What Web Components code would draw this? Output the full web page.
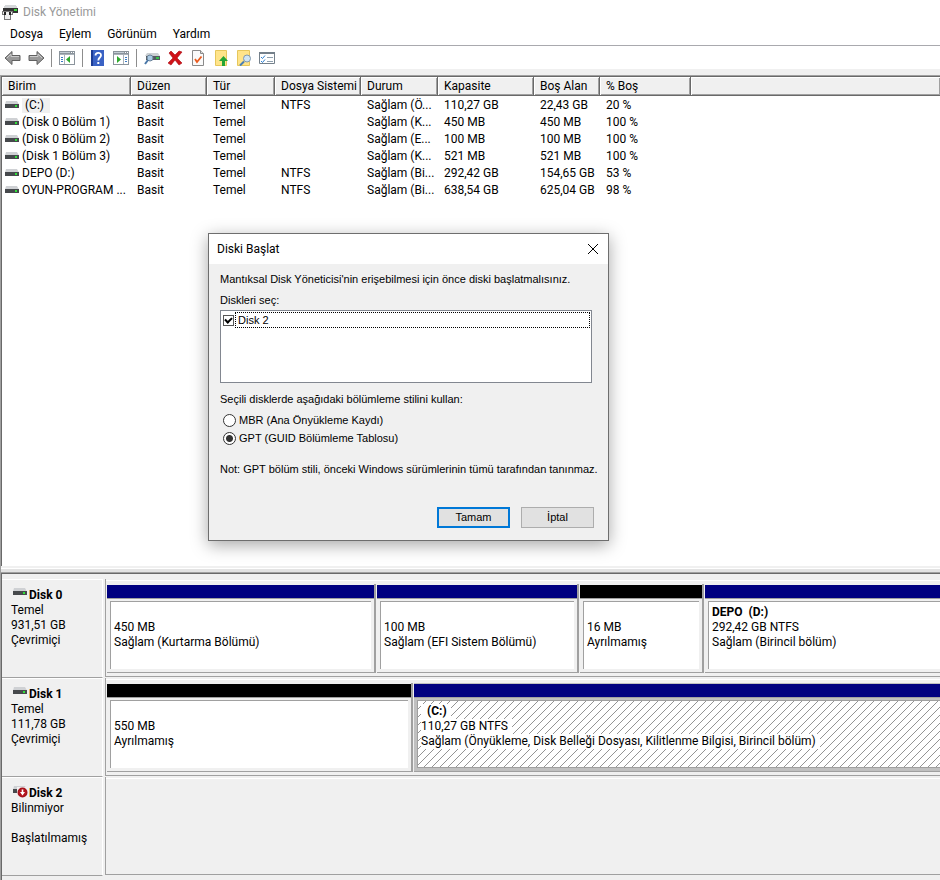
<!DOCTYPE html>
<html lang="tr">
<head>
<meta charset="utf-8">
<title>Disk Yönetimi</title>
<style>
  html, body{
    height: 100%;
    margin: 0;
  }
  body{
    font: 12px/15px Roboto, "Segoe UI", sans-serif;
    color: #000;
    background: #f0f0f0;
    overflow: hidden;
  }
</style>
</head>
<body>

<template id="tpl-window">
<style>
  :host{
    display: flex;
    flex-direction: column;
    height: 100%;
    position: relative;
  }
  main{
    flex: 1;
    min-height: 0;
    display: flex;
    flex-direction: column;
    border-left: 1px solid #a0a0a0;
    border-top: 1px solid #a0a0a0;
  }
  .volumes{
    flex: 0 0 490px;
    background: #fff;
    border-left: 1px solid #696969;
    border-top: 1px solid #696969;
    box-sizing: border-box;
  }
  .splitter{
    height: 7px;
    box-sizing: border-box;
    border-top: 2px solid #f0f0f0;
    border-bottom: 1px solid #a0a0a0;
    background: linear-gradient(#fff 1px, #e3e3e3 1px);
  }
  .disks{
    flex: 1;
    min-height: 0;
    overflow: hidden;
    padding-top: 5px;
    border-left: 1px solid #696969;
    border-top: 1px solid #696969;
  }
</style>
<slot name="bars"></slot>
<main>
  <div class="volumes"><slot name="volumes"></slot></div>
  <div class="splitter"></div>
  <div class="disks"><slot name="disks"></slot></div>
</main>
<slot name="dialog"></slot>
</template>

<template id="tpl-title">
<style>
  :host{
    display: flex;
    align-items: center;
    gap: 5px;
    height: 24px;
    padding-left: 2px;
    background: #fff;
    color: #999;
  }
</style>
<svg width="16" height="16" viewBox="0 0 16 16" shape-rendering="crispEdges">
  <path d="M3 1h11l2 4H1z" fill="#d5d7d9"/>
  <path d="M1 4h15v5H1z" fill="#333"/>
  <path d="M12 5h3v2h-3z" fill="#3bd53b"/>
  <path d="M0 7h11v4H9v5H2v-5H0z" fill="#777"/>
  <path d="M1 8h9v2H8v5H3v-5H1z" fill="#eee"/>
  <path d="M2 8h2v3H2zM7 8h2v3H7z" fill="#222"/>
</svg>
<slot></slot>
</template>

<template id="tpl-menu">
<style>
  :host{
    display: block;
    background: #fff;
    border-bottom: 1px solid #a9a9ae;
  }
  nav{
    display: flex;
    gap: 16px;
    height: 21px;
    padding-left: 10px;
    align-items: center;
  }
  button{
    font: inherit;
    color: inherit;
    border: 0;
    padding: 0;
    background: none;
  }
</style>
<nav></nav>
</template>

<template id="tpl-tools">
<style>
  :host{
    display: flex;
    align-items: center;
    height: 23px;
    padding-left: 1px;
    background: #fff;
    border-bottom: 6px solid #f0f0f0;
  }
  button{
    width: 23px;
    height: 22px;
    padding: 0;
    border: 0;
    background: none;
    display: flex;
    align-items: center;
    justify-content: center;
  }
  i{
    width: 1px;
    height: 18px;
    margin: 0 4px;
    background: #8d8d8d;
  }
  i + button{
    margin-left: -1px;
  }
</style>
<button aria-label="Geri"><svg width="18" height="16" viewBox="0 0 18 16"><path d="M1 8l7-6.500v4h8v5H8v4z" fill="#999" stroke="#606060"/><path d="M3 8l4-4v2.500h8" fill="none" stroke="#ccc"/></svg></button>
<button aria-label="İleri"><svg width="18" height="16" viewBox="0 0 18 16"><path d="M17 8l-7-6.500v4H2v5h8v4z" fill="#999" stroke="#606060"/><path d="M3 6.500h8V4l4 4" fill="none" stroke="#ccc"/></svg></button>
<i></i>
<button aria-label="Konsol ağacı"><svg width="16" height="16" viewBox="0 0 16 16" shape-rendering="crispEdges"><path d="M0 1h16v14H0z" fill="#8b949c"/><path d="M1 5h14v9H1z" fill="#fff"/><path d="M1 2h10v1H1z" fill="#c3ccd4"/><path d="M12 2h1v1h-1zM14 2h1v1h-1z" fill="#fff"/><path d="M1 4h14v1H1zM5 5h1v9H5z" fill="#aab2ba"/><path d="M2 7h2v1H2zM2 9h2v1H2zM2 11h2v1H2z" fill="#3b7bc4"/><path d="M11 6v7L7 9.500z" fill="#2daa2d" shape-rendering="auto"/></svg></button>
<i></i>
<button aria-label="Yardım"><svg width="14" height="16" viewBox="0 0 14 16"><path d="M0 0h13v16H0z" fill="#3a62c4"/><path d="M0 0h2v16H0z" fill="#1d3c94"/><path d="M4.500 5.500C4.500 2 10 2 10 5.200 10 7.500 7.300 7.600 7.300 10.500" fill="none" stroke="#fff" stroke-width="1.800"/><path d="M6.300 12h2v2h-2z" fill="#fff"/></svg></button>
<button aria-label="Eylem bölmesi"><svg width="16" height="16" viewBox="0 0 16 16" shape-rendering="crispEdges"><path d="M0 1h16v14H0z" fill="#8b949c"/><path d="M1 5h14v9H1z" fill="#fff"/><path d="M1 2h10v1H1z" fill="#c3ccd4"/><path d="M12 2h1v1h-1zM14 2h1v1h-1z" fill="#fff"/><path d="M1 4h14v1H1zM10 5h1v9h-1z" fill="#aab2ba"/><path d="M12 7h2v1h-2zM12 9h2v1h-2zM12 11h2v1h-2z" fill="#3b7bc4"/><path d="M4 6v7l4-3.500z" fill="#2daa2d" shape-rendering="auto"/></svg></button>
<i></i>
<button aria-label="Diskleri yeniden tara"><svg width="16" height="16" viewBox="0 0 16 16"><path d="M3 3h11l2 3H1z" fill="#ccd0d3"/><path d="M2 6h14v4H2z" fill="#555b60"/><path d="M12 7h3v2h-3z" fill="#35c449"/><circle cx="6" cy="8" r="3" fill="#a9c9e3" stroke="#6a8299"/><path d="M4 10l-3 4" stroke="#4a78a8" stroke-width="2"/></svg></button>
<button aria-label="Sil"><svg width="16" height="16" viewBox="0 0 16 16"><path d="M2 3l2-2 4 4 4-4 3 1-5 6 5 5-3 2-4-5-4 5-3-2 5-5z" fill="#d01218" stroke="#a80a10" stroke-width=".6"/></svg></button>
<button aria-label="Özellikler"><svg width="14" height="16" viewBox="0 0 14 16"><path d="M1.500.5h8l3 3v12h-11z" fill="#fafafa" stroke="#8a8a8a"/><path d="M9.500.5v3h3" fill="#ddd" stroke="#8a8a8a"/><path d="M4 9l2 3 4.500-5.500" fill="none" stroke="#ea5b1f" stroke-width="1.800"/></svg></button>
<button aria-label="Yukarı"><svg width="16" height="16" viewBox="0 0 16 16"><path d="M2.500.5h11v15h-11z" fill="#ffe48a" stroke="#e6c75c"/><path d="M9 16v-5H6l4.500-5 4.500 5h-3v5z" fill="#25a535"/></svg></button>
<button aria-label="Ara"><svg width="16" height="16" viewBox="0 0 16 16"><path d="M1.500.5h12v15h-12z" fill="#ffe48a" stroke="#e6c75c"/><circle cx="11" cy="8.500" r="3.500" fill="#cfe5f5" stroke="#8299ad"/><path d="M8 11.500l-4 4" stroke="#4a7fb5" stroke-width="2"/></svg></button>
<button aria-label="Liste"><svg width="16" height="16" viewBox="0 0 16 16"><path d="M.5 2.500h15v11H.5z" fill="#fff" stroke="#74808a"/><path d="M0 2h16v2H0z" fill="#74808a"/><path d="M8 7.500h6M8 11.500h6" stroke="#8fa0ae"/><path d="M2 7l1.500 1.500L6 5.500M2 11l1.500 1.500L6 9.500" fill="none" stroke="#2c7fd0"/></svg></button>
</template>

<template id="tpl-disk-icon">
<style>
  :host{
    display: block;
    width: 14px;
    height: 8px;
    flex: none;
    white-space: normal;
  }
  svg{
    display: block;
  }
  .error, :host([state="error"]) .led{
    display: none;
  }
  :host([state="error"]) .error{
    display: inline;
  }
</style>
<svg width="14" height="8" viewBox="0 0 14 8" overflow="visible">
  <path d="M1 0h11l2 3.500H0z" fill="#cfd1d4"/>
  <path d="M0 3h14v4H0z" fill="#46494c"/>
  <path class="led" d="M10 4h2v2h-2z" fill="#2fe03a"/>
  <g class="error">
    <path d="M4 1h10v8H4z" fill="#f0f0f0"/>
    <circle cx="9.500" cy="6.500" r="4" fill="#fff" stroke="#a5121b" stroke-width="2"/>
    <circle cx="9.500" cy="6.500" r="3.500" fill="#b5121b"/>
    <path d="M8.700 3.500h1.600V6H12L9.500 9.500 7 6h1.700z" fill="#fff"/>
  </g>
</svg>
</template>

<template id="tpl-volumes">
<style>
  :host{
    display: block;
  }
  table{
    width: 100%;
    table-layout: fixed;
    border-collapse: separate;
    border-spacing: 0;
  }
  th, td{
    padding: 0 0 0 6px;
    text-align: left;
    font-weight: normal;
    white-space: nowrap;
    overflow: hidden;
  }
  th{
    height: 17px;
    padding-top: 1px;
    background: #f0f0f0;
    border-right: 1px solid #696969;
    border-bottom: 1px solid #696969;
    box-shadow: inset 1px 1px #fff, inset -1px -1px #a0a0a0;
  }
  th:last-child{
    border-right: 0;
  }
  td{
    height: 16px;
    padding-top: 1px;
  }
  td:first-child{
    padding-left: 3px;
  }
  .name{
    display: flex;
    align-items: center;
    gap: 3px;
  }
  .name disk-icon{
    align-self: flex-start;
    margin-top: 3px;
  }
  .focused span{
    padding: 0 6px 0 3px;
    background: #f0f0f0;
  }
</style>
<table>
  <colgroup></colgroup>
  <thead><tr></tr></thead>
  <tbody></tbody>
</table>
</template>

<template id="tpl-disk-row">
<style>
  :host{
    display: flex;
    height: 99px;
  }
  .label{
    flex: 0 0 100px;
    height: 97px;
    border-top: 1px solid #fff;
    border-right: 1px solid #fff;
    border-bottom: 1px solid #a0a0a0;
  }
  .text{
    padding: 8px 0 0 9px;
  }
  .info{
    white-space: pre-line;
  }
  .head{
    display: flex;
    gap: 2px;
    padding-left: 2px;
    font-weight: bold;
  }
  .parts{
    flex: 1;
    min-width: 0;
    margin-left: 2px;
    display: flex;
    height: 98px;
    box-sizing: border-box;
    padding: 5px 0 3px 1px;
    border-left: 1px solid #a0a0a0;
    border-bottom: 1px solid #a0a0a0;
    background: linear-gradient(#fff 1px, transparent 1px) 0 1px no-repeat;
  }
</style>
<div class="label">
  <div class="text"><div class="head"><disk-icon></disk-icon><span class="name"></span></div><div class="info"></div></div>
</div>
<div class="parts"><slot></slot></div>
</template>

<template id="tpl-partition">
<style>
  :host{
    --bar: #000080;
    display: flex;
    flex-direction: column;
    box-sizing: border-box;
    min-width: 0;
    border-right: 2px solid #a0a0a0;
    border-bottom: 1px solid #a0a0a0;
    margin-right: 1px;
  }
  :host([unallocated]){
    --bar: #000;
  }
  :host([fill]){
    flex: 1;
    border-right: 0;
    margin-right: 0;
  }
  .bar{
    height: 13px;
    margin-top: 1px;
    background: var(--bar);
    border-bottom: 1px solid #a0a0a0;
  }
  .box{
    flex: 1;
    margin: 2px 3px 3px;
    box-sizing: border-box;
    padding: 3px 3px 0;
    border-top: 1px solid #a0a0a0;
    border-left: 1px solid #a0a0a0;
    background: #fff;
    white-space: pre;
    overflow: hidden;
  }
  :host([fill]) .box{
    margin-right: 0;
  }
  :host([selected]){
    background: #c0c0c0;
  }
  :host([selected]) .box{
    background: linear-gradient(135deg, #fff 46%, #949494 46% 54%, #fff 54%) 0 0 / 8px 8px;
    border-bottom: 1px solid #a0a0a0;
  }
  .box div{
    height: 15px;
  }
  .box span{
    display: inline-block;
    height: 15px;
  }
  :host([selected]) span{
    background: #fff;
    padding-right: 4px;
  }
  .title{
    font-weight: bold;
  }
</style>
<div class="bar"></div>
<div class="box"></div>
</template>

<template id="tpl-dialog">
<style>
  :host{
    position: absolute;
    left: 208px;
    top: 233px;
    width: 401px;
    box-sizing: border-box;
    border: 1px solid #6e6e6e;
    background: #f0f0f0;
    box-shadow: 0 4px 16px rgba(0, 0, 0, .35);
    font: 11px/15px "Liberation Sans", Arial, sans-serif;
  }
  header{
    display: flex;
    align-items: center;
    justify-content: space-between;
    height: 30px;
    padding: 0 9px 0 8px;
    background: #fff;
    font: 12px/15px Roboto, "Segoe UI", sans-serif;
  }
  header button{
    display: flex;
    padding: 0 0 1px;
    border: 0;
    background: none;
  }
  form{
    padding: 8px 14px 12px 11px;
  }
  p{
    margin: 0;
    white-space: nowrap;
  }
  .caption{
    margin-top: 6px;
  }
  .list{
    height: 73px;
    box-sizing: border-box;
    margin: 2px 2px 9px 0;
    padding: 1px;
    border: 1px solid #828790;
    background: #fff;
  }
  .list label{
    display: flex;
    align-items: center;
    gap: 1px;
  }
  .list label span{
    flex: 1;
    padding-left: 2px;
    border: 1px dotted #000;
    line-height: 14px;
  }
  input{
    appearance: none;
    margin: 0;
    box-sizing: border-box;
    flex: none;
    background: #fff;
  }
  input[type=checkbox]{
    width: 11px;
    height: 11px;
    margin-left: 1px;
    border: 1px solid #555;
    position: relative;
  }
  input[type=checkbox]:checked::after{
    content: "";
    position: absolute;
    left: 1px;
    top: 1px;
    box-sizing: border-box;
    width: 7px;
    height: 5px;
    border-left: 2px solid #000;
    border-bottom: 2px solid #000;
    transform: rotate(-45deg);
  }
  input[type=radio]{
    width: 13px;
    height: 13px;
    border: 1px solid #333;
    border-radius: 50%;
  }
  input[type=radio]:checked{
    background: radial-gradient(circle, #333 0 3px, #fff 4px);
  }
  .styles{
    display: grid;
    gap: 3px;
    margin: 6px 0 16px;
    padding-left: 3px;
  }
  .styles label{
    display: flex;
    align-items: center;
    gap: 3px;
  }
  .actions{
    display: flex;
    justify-content: flex-end;
    gap: 11px;
    margin-top: 30px;
  }
</style>
<header><span>Diski Başlat</span><button aria-label="Kapat"><svg width="12" height="12" viewBox="0 0 12 12"><path d="M1 1l10 10M11 1L1 11" stroke="#000"/></svg></button></header>
<form>
  <p>Mantıksal Disk Yöneticisi'nin erişebilmesi için önce diski başlatmalısınız.</p>
  <p class="caption">Diskleri seç:</p>
  <div class="list"><label><input type="checkbox" checked><span>Disk 2</span></label></div>
  <p>Seçili disklerde aşağıdaki bölümleme stilini kullan:</p>
  <div class="styles">
    <label><input type="radio" name="style">MBR (Ana Önyükleme Kaydı)</label>
    <label><input type="radio" name="style" checked>GPT (GUID Bölümleme Tablosu)</label>
  </div>
  <p>Not: GPT bölüm stili, önceki Windows sürümlerinin tümü tarafından tanınmaz.</p>
  <div class="actions">
    <push-button primary>Tamam</push-button>
    <push-button>İptal</push-button>
  </div>
</form>
</template>

<template id="tpl-button">
<style>
  :host{
    display: block;
  }
  button{
    display: block;
    width: 73px;
    height: 21px;
    padding: 0;
    font: inherit;
    color: #000;
    background: #e1e1e1;
    border: 1px solid #adadad;
  }
  :host([primary]) button{
    border: 2px solid #0078d7;
  }
</style>
<button type="button"><slot></slot></button>
</template>

<disk-window>
  <title-bar slot="bars">Disk Yönetimi</title-bar>
  <menu-bar slot="bars" items="Dosya,Eylem,Görünüm,Yardım"></menu-bar>
  <tool-bar slot="bars"></tool-bar>
  <volume-table slot="volumes"></volume-table>

  <disk-row slot="disks" name="Disk 0" info="Temel|931,51 GB|Çevrimiçi">
    <disk-partition width="269" info="450 MB|Sağlam (Kurtarma Bölümü)"></disk-partition>
    <disk-partition width="202" info="100 MB|Sağlam (EFI Sistem Bölümü)"></disk-partition>
    <disk-partition width="124" unallocated info="16 MB|Ayrılmamış"></disk-partition>
    <disk-partition fill label="DEPO  (D:)" info="292,42 GB NTFS|Sağlam (Birincil bölüm)"></disk-partition>
  </disk-row>
  <disk-row slot="disks" name="Disk 1" info="Temel|111,78 GB|Çevrimiçi">
    <disk-partition width="306" unallocated info="550 MB|Ayrılmamış"></disk-partition>
    <disk-partition fill selected label="  (C:)" info="110,27 GB NTFS|Sağlam (Önyükleme, Disk Belleği Dosyası, Kilitlenme Bilgisi, Birincil bölüm)"></disk-partition>
  </disk-row>
  <disk-row slot="disks" name="Disk 2" state="error" info="Bilinmiyor||Başlatılmamış"></disk-row>

  <init-dialog slot="dialog" role="dialog" aria-label="Diski Başlat"></init-dialog>
</disk-window>

<script>
const COLUMNS = [
  ['Birim', 129], ['Düzen', 76], ['Tür', 68], ['Dosya Sistemi', 86], ['Durum', 77],
  ['Kapasite', 96], ['Boş Alan', 66], ['% Boş', 91], ['', 0]
];

const VOLUMES = [
  ['(C:)', 'Basit', 'Temel', 'NTFS', 'Sağlam (Ö...', '110,27 GB', '22,43 GB', '20 %'],
  ['(Disk 0 Bölüm 1)', 'Basit', 'Temel', '', 'Sağlam (K...', '450 MB', '450 MB', '100 %'],
  ['(Disk 0 Bölüm 2)', 'Basit', 'Temel', '', 'Sağlam (E...', '100 MB', '100 MB', '100 %'],
  ['(Disk 1 Bölüm 3)', 'Basit', 'Temel', '', 'Sağlam (K...', '521 MB', '521 MB', '100 %'],
  ['DEPO (D:)', 'Basit', 'Temel', 'NTFS', 'Sağlam (Bi...', '292,42 GB', '154,65 GB', '53 %'],
  ['OYUN-PROGRAM ...', 'Basit', 'Temel', 'NTFS', 'Sağlam (Bi...', '638,54 GB', '625,04 GB', '98 %']
];

class BaseElement extends HTMLElement {
  constructor(id) {
    super();
    this.attachShadow({ mode: 'open' });
    this.shadowRoot.appendChild(document.getElementById(id).content.cloneNode(true));
  }

  $(selector) {
    return this.shadowRoot.querySelector(selector);
  }
}

class DiskWindow extends BaseElement {
  constructor() { super('tpl-window'); }
}

class TitleBar extends BaseElement {
  constructor() { super('tpl-title'); }
}

class ToolBar extends BaseElement {
  constructor() { super('tpl-tools'); }
}

class DiskIcon extends BaseElement {
  constructor() { super('tpl-disk-icon'); }
}

class PushButton extends BaseElement {
  constructor() { super('tpl-button'); }
}

class InitDialog extends BaseElement {
  constructor() { super('tpl-dialog'); }
}

class MenuBar extends BaseElement {
  constructor() { super('tpl-menu'); }

  connectedCallback() {
    this.getAttribute('items').split(',').forEach((item) => {
      const button = document.createElement('button');
      button.textContent = item;
      this.$('nav').appendChild(button);
    });
  }
}

class VolumeTable extends BaseElement {
  constructor() { super('tpl-volumes'); }

  connectedCallback() {
    COLUMNS.forEach(([title, width]) => {
      const col = document.createElement('col');
      if (width) col.style.width = `${width}px`;
      this.$('colgroup').appendChild(col);

      const th = document.createElement('th');
      th.textContent = title;
      this.$('thead tr').appendChild(th);
    });

    VOLUMES.forEach((volume, index) => {
      const tr = this.$('tbody').insertRow();
      volume.forEach((value, i) => {
        const td = tr.insertCell();
        if (i > 0) {
          td.textContent = value;
          return;
        }
        const name = document.createElement('div');
        name.className = index === 0 ? 'name focused' : 'name';
        name.innerHTML = `<disk-icon></disk-icon><span>${value}</span>`;
        td.appendChild(name);
      });
      tr.insertCell();
    });
  }
}

class DiskRow extends BaseElement {
  constructor() { super('tpl-disk-row'); }

  connectedCallback() {
    this.$('.name').textContent = this.getAttribute('name');
    this.$('.info').textContent = this.getAttribute('info').split('|').join('\n');
    if (this.hasAttribute('state')) {
      this.$('disk-icon').setAttribute('state', this.getAttribute('state'));
    }
  }
}

class DiskPartition extends BaseElement {
  constructor() { super('tpl-partition'); }

  connectedCallback() {
    if (this.hasAttribute('width')) {
      this.style.flex = `0 0 ${this.getAttribute('width')}px`;
    }
    // first line is the volume label, blank when there is none
    const lines = [this.getAttribute('label') || ''].concat(this.getAttribute('info').split('|'));
    lines.forEach((text, i) => {
      const line = document.createElement('div');
      const span = document.createElement('span');
      span.textContent = text;
      if (i === 0) span.className = 'title';
      line.appendChild(span);
      this.$('.box').appendChild(line);
    });
  }
}

customElements.define('disk-icon', DiskIcon);
customElements.define('push-button', PushButton);
customElements.define('title-bar', TitleBar);
customElements.define('menu-bar', MenuBar);
customElements.define('tool-bar', ToolBar);
customElements.define('volume-table', VolumeTable);
customElements.define('disk-partition', DiskPartition);
customElements.define('disk-row', DiskRow);
customElements.define('init-dialog', InitDialog);
customElements.define('disk-window', DiskWindow);
</script>
</body>
</html>
